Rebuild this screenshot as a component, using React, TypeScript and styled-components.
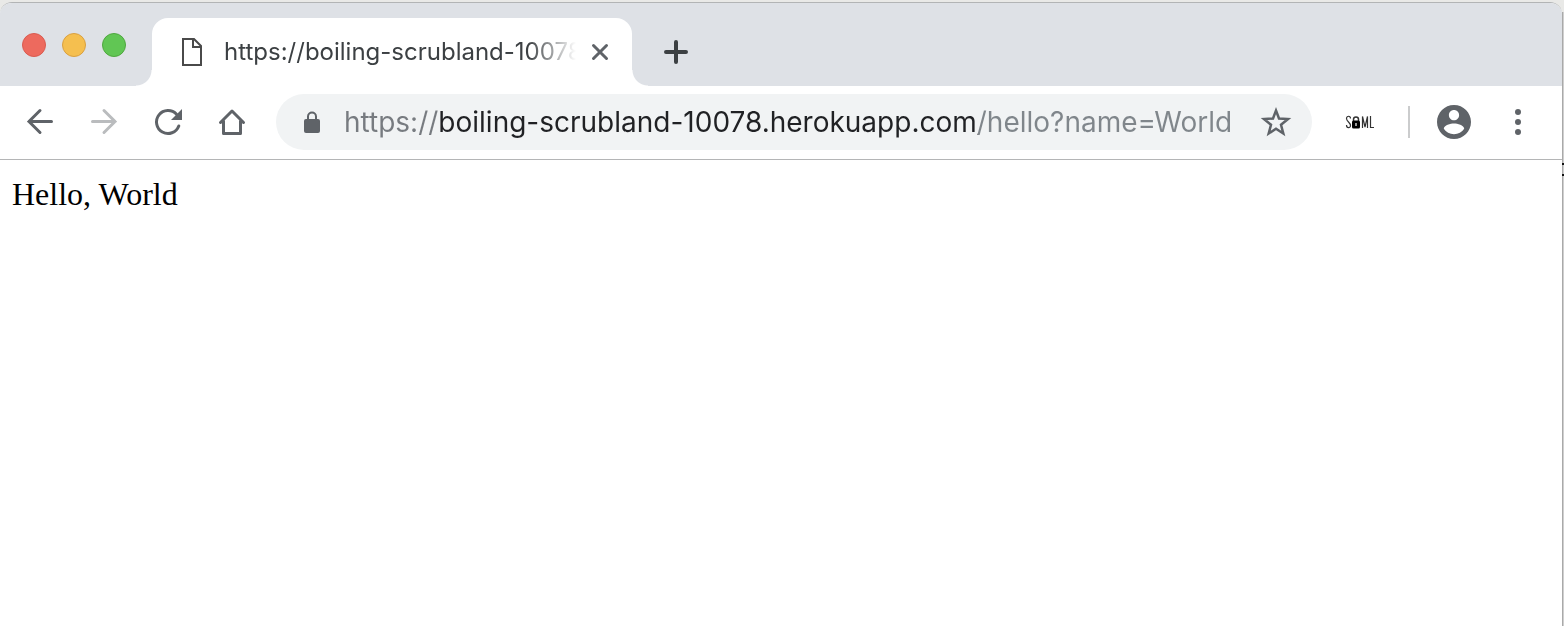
import React from 'react';
import styled, { createGlobalStyle } from 'styled-components';

const GlobalStyle = createGlobalStyle`
  *, *::before, *::after { box-sizing: border-box; }
  body {
    margin: 0;
    font-family: Inter, "Liberation Sans", sans-serif;
    background: #b4b4b4;
  }
  button { font: inherit; }
`;

const Desktop = styled.div`
  min-height: 100vh;
  display: flex;
  padding: 2px 2px 0 0;
  background:
    linear-gradient(#111, #111) right 163px / 2px 2px no-repeat,
    linear-gradient(#111, #111) right 174px / 2px 2px no-repeat,
    linear-gradient(#e9e9e7, #e9e9e7) top / 100% 12px no-repeat,
    linear-gradient(to left, #cfcfcf 1px, #a9a9a9 1px);
`;

const BrowserWindow = styled.div`
  flex: 1;
  min-width: 0;
  display: flex;
  flex-direction: column;
  border-top: 1px solid #b2b4b5;
  border-radius: 12px 12px 0 0;
  background: #fff;
  overflow: hidden;
`;

const TabStrip = styled.header`
  display: flex;
  align-items: flex-end;
  height: 83px;
  padding-left: 22px;
  background: #dee1e6;
`;

const WindowControls = styled.div`
  display: flex;
  gap: 16px;
  width: 130px;
  padding-bottom: 29px;
`;

const WindowControl = styled.button<{ $fill: string; $edge: string }>`
  width: 24px;
  height: 24px;
  padding: 0;
  border: 1px solid ${p => p.$edge};
  border-radius: 50%;
  background: ${p => p.$fill};
`;

const Tab = styled.div`
  position: relative;
  display: flex;
  align-items: center;
  width: 480px;
  height: 68px;
  padding: 0 20px 0 28px;
  border-radius: 16px 16px 0 0;
  background: #fff;
  color: #4a4a4a;

  &::before, &::after {
    content: '';
    position: absolute;
    bottom: 0;
    width: 16px;
    height: 16px;
  }
  &::before {
    right: 100%;
    background: radial-gradient(circle at 0 0, transparent 15px, #fff 16px);
  }
  &::after {
    left: 100%;
    background: radial-gradient(circle at 100% 0, transparent 15px, #fff 16px);
  }
`;

const TabTitle = styled.span`
  flex: 1;
  min-width: 0;
  margin: 0 12px 0 20px;
  overflow: hidden;
  white-space: nowrap;
  font-size: 24px;
  line-height: 32px;
  color: #3c4043;
  mask-image: linear-gradient(to left, transparent, #000 48px);
`;

const IconButton = styled.button<{ $width: number; $color?: string }>`
  display: flex;
  flex: none;
  align-items: center;
  justify-content: center;
  width: ${p => p.$width}px;
  height: 48px;
  padding: 0;
  border: 0;
  background: none;
  color: ${p => p.$color ?? '#5f6368'};
`;

const NewTabArea = styled.div`
  height: 58px;
  margin-left: 20px;
`;

const Toolbar = styled.nav`
  display: flex;
  align-items: center;
  height: 74px;
  padding: 0 12px 2px 8px;
  border-bottom: 1px solid #b4b5b6;
  background: #fff;
`;

const AddressBar = styled.form`
  display: flex;
  flex: 1;
  align-items: center;
  min-width: 0;
  height: 56px;
  margin: 0 12px;
  padding: 0 12px;
  border-radius: 28px;
  background: #f1f3f4;
`;

const AddressInput = styled.input`
  flex: 1;
  min-width: 0;
  height: 40px;
  margin-left: 8px;
  padding: 0;
  border: 0;
  outline: 0;
  font-family: inherit;
  font-size: 28px;
  color: transparent;
  background: linear-gradient(to right, #777b80 96px, #202124 96px 634px, #80868b 634px);
  background-clip: text;
  -webkit-background-clip: text;
`;

const Divider = styled.span`
  width: 2px;
  height: 32px;
  margin: 0 12px;
  background: #cbcccd;
`;

const Page = styled.main`
  flex: 1;
  padding: 16px 12px;
  font-family: "Liberation Serif", serif;
  font-size: 32px;
  line-height: 36px;
  color: #000;
`;

const Stroke = { fill: 'none', stroke: 'currentColor', strokeWidth: 3 };

const PageIcon = () => (
  <svg width="24" height="32" viewBox="0 0 24 32" {...Stroke} strokeWidth={2} aria-hidden="true">
    <path d="M3 3h11l7 7v19H3zM13 3v8h8" />
  </svg>
);

const CloseIcon = () => (
  <svg width="24" height="24" viewBox="0 0 24 24" {...Stroke} strokeLinecap="round">
    <path d="M5.500 5.500l13 13M18.500 5.500l-13 13" />
  </svg>
);

const PlusIcon = () => (
  <svg width="28" height="28" viewBox="0 0 28 28" {...Stroke} strokeWidth={4} strokeLinecap="round">
    <path d="M14 4v20M4 14h20" />
  </svg>
);

const ArrowIcon = ({ flip = false }: { flip?: boolean }) => (
  <svg width="32" height="32" viewBox="0 0 32 32" {...Stroke} strokeLinecap="round">
    <g transform={flip ? 'matrix(-1 0 0 1 32 0)' : undefined}>
      <path d="M27.500 15.500H5M16 4.500L5 15.500l11 11" />
    </g>
  </svg>
);

const ReloadIcon = () => (
  <svg width="32" height="32" viewBox="0 0 32 32" {...Stroke}>
    <path d="M24.500 8.200A11.500 11.500 0 1 0 26.800 20" strokeLinecap="round" />
    <path d="M30 3v11H19z" fill="currentColor" stroke="none" />
  </svg>
);

const HomeIcon = () => (
  <svg width="32" height="32" viewBox="0 0 32 32" {...Stroke} strokeLinejoin="round" strokeLinecap="round">
    <path d="M4.500 16.500L16 5l11.500 11.500M7.500 15v12.500h17V15" />
  </svg>
);

const LockIcon = () => (
  <svg width="48" height="32" viewBox="0 0 48 32" fill="#5f6368" aria-hidden="true">
    <rect x="16" y="13" width="16" height="14" rx="2" />
    <path d="M20 14v-3.500a4 4 0 0 1 8 0V14" fill="none" stroke="#5f6368" strokeWidth="2" />
  </svg>
);

const StarIcon = () => (
  <svg width="32" height="32" viewBox="0 0 32 32" {...Stroke} strokeWidth={2.500}>
    <path d="M16 4.500l3 8 9 .6-7 5.600 2.300 8.800-7.300-4.800-7.300 4.800 2.300-8.800-7-5.600 9-.6z" />
  </svg>
);

const SamlIcon = () => (
  <svg width="32" height="32" viewBox="0 0 32 32" fill="none" stroke="#333" strokeWidth="1.200">
    <path d="M6.500 12.500c0-3-4-3-4 0 0 3 4 4 4 7 0 3-4 3-4-.5M18.500 22V10.500L21 21l2.500-10.500V22M26.500 10v11.500H30" />
    <path d="M9.500 15v-1.500a2.500 2.500 0 0 1 5 0V15" strokeWidth="1.500" />
    <rect x="8" y="14.500" width="8" height="8" rx="1.500" fill="#000" stroke="none" />
    <path d="M12 17v3" stroke="#fff" />
  </svg>
);

const AvatarIcon = () => (
  <svg width="34" height="34" viewBox="2 2 20 20" fill="currentColor">
    <path d="M12 2C6.480 2 2 6.480 2 12s4.480 10 10 10 10-4.480 10-10S17.520 2 12 2zm0 3c1.660 0 3 1.340 3 3s-1.340 3-3 3-3-1.340-3-3 1.340-3 3-3zm0 14.200c-2.500 0-4.710-1.280-6-3.220.03-1.990 4-3.080 6-3.080 1.990 0 5.970 1.090 6 3.080-1.290 1.940-3.500 3.220-6 3.220z" />
  </svg>
);

const MenuIcon = () => (
  <svg width="32" height="32" viewBox="0 0 32 32" fill="currentColor">
    <circle cx="16" cy="6" r="3" />
    <circle cx="16" cy="16" r="3" />
    <circle cx="16" cy="26" r="3" />
  </svg>
);

const controls = [
  { label: 'Close window', fill: '#ed6a5e', edge: '#d95b50' },
  { label: 'Minimize window', fill: '#f5bf4f', edge: '#d9a041' },
  { label: 'Zoom window', fill: '#61c654', edge: '#4fa73f' },
];

export default function App() {
  return (
    <>
      <GlobalStyle />
      <Desktop>
        <BrowserWindow>
          <TabStrip>
            <WindowControls>
              {controls.map(c => (
                <WindowControl key={c.label} aria-label={c.label} $fill={c.fill} $edge={c.edge} />
              ))}
            </WindowControls>
            <Tab>
              <PageIcon />
              <TabTitle>https://boiling-scrubland-10078</TabTitle>
              <IconButton aria-label="Close tab" $width={24}><CloseIcon /></IconButton>
            </Tab>
            <NewTabArea>
              <IconButton aria-label="New tab" $width={48} $color="#3c4043"><PlusIcon /></IconButton>
            </NewTabArea>
          </TabStrip>
          <Toolbar>
            <IconButton aria-label="Back" $width={64}><ArrowIcon /></IconButton>
            <IconButton aria-label="Forward" $width={64} $color="#babcbe"><ArrowIcon flip /></IconButton>
            <IconButton aria-label="Reload" $width={64}><ReloadIcon /></IconButton>
            <IconButton aria-label="Home" $width={64}><HomeIcon /></IconButton>
            <AddressBar onSubmit={e => e.preventDefault()}>
              <LockIcon />
              <AddressInput
                type="text"
                aria-label="Address"
                spellCheck={false}
                defaultValue="https://boiling-scrubland-10078.herokuapp.com/hello?name=World"
              />
              <IconButton type="button" aria-label="Bookmark this page" $width={48}><StarIcon /></IconButton>
            </AddressBar>
            <IconButton aria-label="SAML" $width={72}><SamlIcon /></IconButton>
            <Divider />
            <IconButton aria-label="Profile" $width={64}><AvatarIcon /></IconButton>
            <IconButton aria-label="Menu" $width={64}><MenuIcon /></IconButton>
          </Toolbar>
          <Page>Hello, World</Page>
        </BrowserWindow>
      </Desktop>
    </>
  );
}
